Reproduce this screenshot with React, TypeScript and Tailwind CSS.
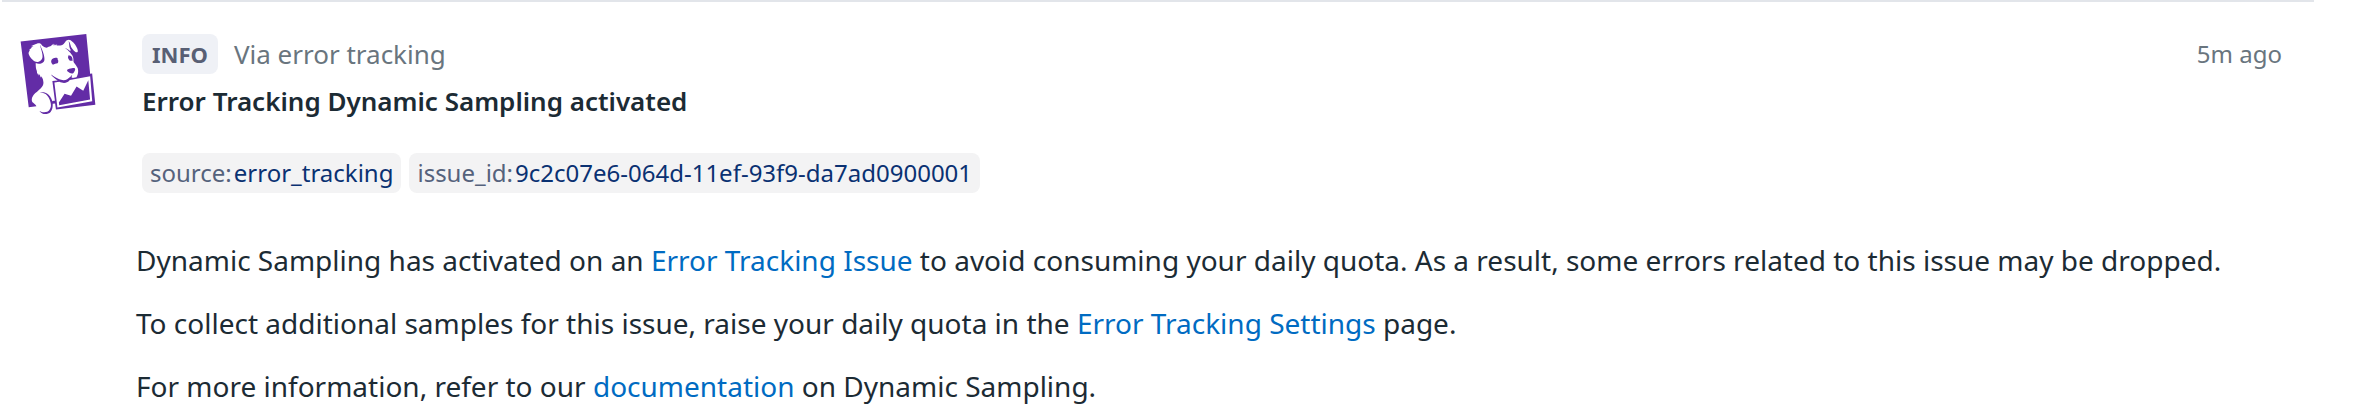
import { SiDatadog } from "react-icons/si";

const tags = [
  { name: "source", value: "error_tracking" },
  { name: "issue_id", value: "9c2c07e6-064d-11ef-93f9-da7ad0900001" },
];

const linkClass = "text-[#006bc2] hover:underline";

export default function App() {
  return (
    <main className="bg-white pr-12 pl-0.5 font-['Noto_Sans',sans-serif] text-[#1c2b34]">
      <article className="flex items-start gap-[38px] border-t-2 border-[#e2e5ea] pt-8 pr-[26px] pl-4">
        <SiDatadog className="size-20 shrink-0 text-[#632ca6]" aria-label="Datadog" />
        <div className="min-w-0 flex-1">
          <header className="px-1.5">
            <div className="flex h-10 items-center gap-4 leading-10 text-[#69757e]">
              <span className="rounded-lg bg-[#eff1f6] px-2.5 text-[22px] font-bold text-[#585f74]">
                INFO
              </span>
              <span className="text-[26px]">Via error tracking</span>
              <time className="ml-auto text-2xl">5m ago</time>
            </div>
            <h1 className="mt-[7px] text-[26px] leading-10 font-semibold">
              Error Tracking Dynamic Sampling activated
            </h1>
            <ul className="mt-8 flex flex-wrap gap-2 text-2xl leading-10">
              {tags.map((tag) => (
                <li key={tag.name} className="flex gap-0.5 rounded-lg bg-[#f3f3f4] px-2">
                  <span className="text-[#55627c]">{tag.name}:</span>
                  <span className="text-[#0a3172]">{tag.value}</span>
                </li>
              ))}
            </ul>
          </header>
          <div className="mt-[46px] flex flex-col gap-5 text-[28px] leading-[43px]">
            <p>
              Dynamic Sampling has activated on an{" "}
              <a href="#issue" className={linkClass}>Error Tracking Issue</a> to avoid consuming
              your daily quota. As a result, some errors related to this issue may be dropped.
            </p>
            <p>
              To collect additional samples for this issue, raise your daily quota in the{" "}
              <a href="#settings" className={linkClass}>Error Tracking Settings</a> page.
            </p>
            <p>
              For more information, refer to our{" "}
              <a href="#documentation" className={linkClass}>documentation</a> on Dynamic Sampling.
            </p>
          </div>
        </div>
      </article>
    </main>
  );
}
